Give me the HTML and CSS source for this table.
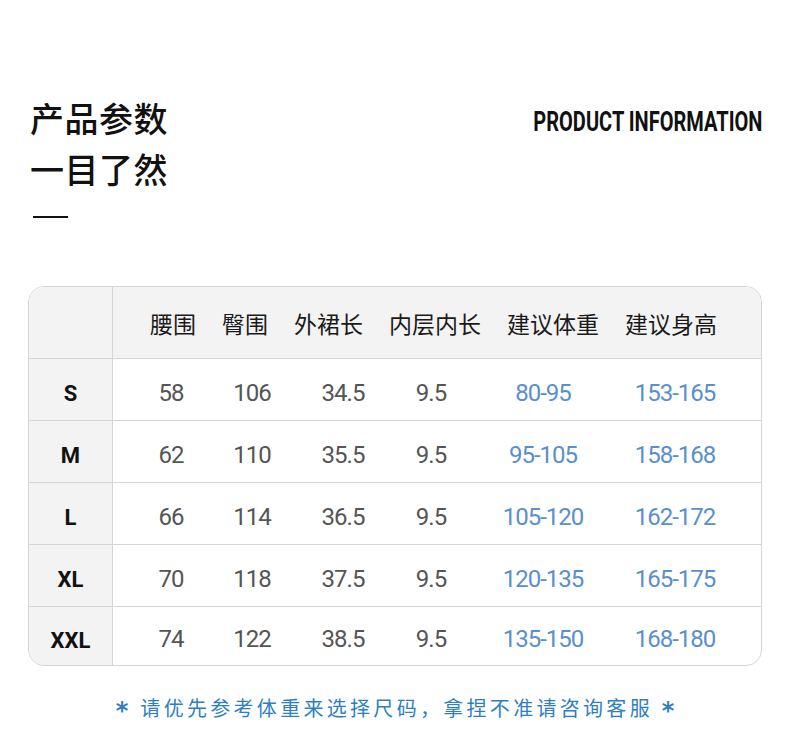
FILE: index.html
```html
<!DOCTYPE html>
<html lang="zh">
<head>
<meta charset="utf-8">
<title>产品参数</title>
<link rel="stylesheet" href="styles.css">
</head>
<body>
<div class="page">
  <header class="head">
    <div class="titles">
      <h1 class="title">产品参数<br>一目了然</h1>
      <div class="dash"></div>
    </div>
    <div class="en"><span class="en-text">PRODUCT INFORMATION</span></div>
  </header>

  <div class="table">
    <div class="row row-head">
      <div class="size-cell"></div>
      <div class="heads">
        <span>腰围</span><span>臀围</span><span>外裙长</span><span>内层内长</span><span>建议体重</span><span>建议身高</span>
      </div>
    </div>
    <div class="row">
      <div class="size-cell">S</div>
      <div class="vals"><span>58</span><span>106</span><span>34.5</span><span>9.5</span><span class="blue">80-95</span><span class="blue">153-165</span></div>
    </div>
    <div class="row">
      <div class="size-cell">M</div>
      <div class="vals"><span>62</span><span>110</span><span>35.5</span><span>9.5</span><span class="blue">95-105</span><span class="blue">158-168</span></div>
    </div>
    <div class="row">
      <div class="size-cell">L</div>
      <div class="vals"><span>66</span><span>114</span><span>36.5</span><span>9.5</span><span class="blue">105-120</span><span class="blue">162-172</span></div>
    </div>
    <div class="row">
      <div class="size-cell">XL</div>
      <div class="vals"><span>70</span><span>118</span><span>37.5</span><span>9.5</span><span class="blue">120-135</span><span class="blue">165-175</span></div>
    </div>
    <div class="row row-last">
      <div class="size-cell">XXL</div>
      <div class="vals"><span>74</span><span>122</span><span>38.5</span><span>9.5</span><span class="blue">135-150</span><span class="blue">168-180</span></div>
    </div>
  </div>

  <p class="note"><span class="star">*</span><span class="note-text">请优先参考体重来选择尺码，拿捏不准请咨询客服</span><span class="star">*</span></p>
</div>
</body>
</html>
```

FILE: styles.css
```css
html, body {
  margin: 0;
  padding: 0;
  background: #ffffff;
}

body {
  font-family: "Noto Sans CJK SC", "Noto Sans", sans-serif;
  color: #111;
}

.page {
  width: 790px;
  height: 750px;
  overflow: hidden;
}

.head {
  display: flex;
  justify-content: space-between;
  align-items: flex-start;
  padding: 92px 28px 0 30px;
}

.title {
  margin: 0;
  font-size: 34px;
  line-height: 51px;
  font-weight: 500;
  color: #111;
  letter-spacing: 0.5px;
}

.dash {
  width: 35px;
  height: 2px;
  background: #111;
  margin: 22px 0 0 3px;
}

.en {
  padding-top: 16px;
  width: 240px;
  display: flex;
  justify-content: flex-end;
}

.en-text {
  display: inline-block;
  font-family: Roboto, "Liberation Sans", sans-serif;
  font-weight: 700;
  font-size: 28px;
  line-height: 28px;
  color: #111;
  white-space: nowrap;
  transform: scaleX(0.715);
  transform-origin: right center;
}

.table {
  margin: 68px 0 0 28px;
  width: 732px;
  border: 1px solid #d6d6d6;
  border-radius: 16px;
  overflow: hidden;
}

.row {
  display: flex;
  height: 61px;
  border-bottom: 1px solid #d6d6d6;
}

.row-head {
  height: 71px;
  background: #f3f3f3;
}

.row-last {
  border-bottom: none;
  height: 58px;
}

.size-cell {
  width: 84px;
  flex: none;
  background: #f3f3f3;
  border-right: 1px solid #d6d6d6;
  display: flex;
  align-items: center;
  justify-content: center;
  padding-top: 8px;
  box-sizing: border-box;
  font-family: Roboto, "Liberation Sans", sans-serif;
  font-weight: 700;
  font-size: 22px;
  color: #111;
}

.row-head .size-cell {
  padding-top: 0;
}

.heads {
  display: flex;
  align-items: center;
  gap: 26px;
  padding-left: 37px;
  font-size: 23px;
  color: #1a1a1a;
}

.vals {
  display: flex;
  align-items: center;
  padding-left: 23px;
  padding-top: 6px;
  font-family: Roboto, "Liberation Sans", sans-serif;
  font-size: 24px;
  letter-spacing: -1px;
  color: #555;
}

.vals span {
  text-align: center;
  flex: none;
}

.vals span:nth-child(1) { width: 70px; }
.vals span:nth-child(2) { width: 92px; }
.vals span:nth-child(3) { width: 90px; }
.vals span:nth-child(4) { width: 86px; }
.vals span:nth-child(5) { width: 138px; }
.vals span:nth-child(6) { width: 126px; }

.vals .blue {
  color: #5a8fcd;
}

.note {
  margin: 28px 0 0;
  display: flex;
  justify-content: center;
  align-items: center;
  gap: 12px;
  color: #2d7fc1;
  font-size: 20px;
  line-height: 28px;
}

.note-text {
  letter-spacing: 3.3px;
  margin-right: -3.3px;
}

.star {
  font-family: "DejaVu Sans", sans-serif;
  font-weight: 700;
  font-size: 24px;
  line-height: 28px;
  position: relative;
  top: 3px;
}
```
